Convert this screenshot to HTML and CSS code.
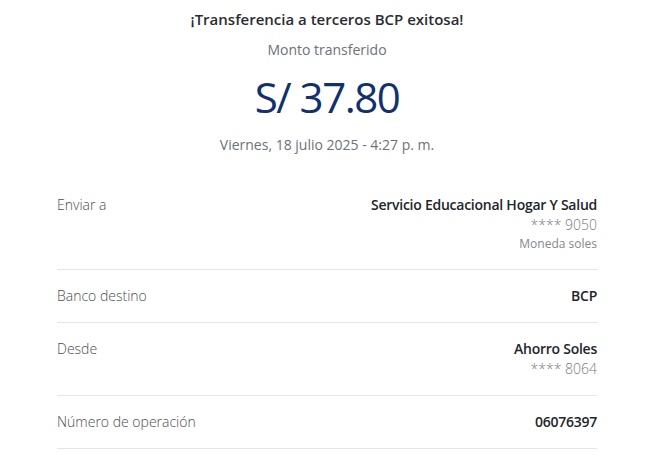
FILE: index.html
```html
<!DOCTYPE html>
<html lang="es">
<head>
    <meta charset="UTF-8">
    <meta name="viewport" content="width=device-width, initial-scale=1.0">
    <title>Constancia de transferencia</title>
    <link rel="stylesheet" href="styles.css">
</head>
<body>

    <div class="receipt">
        <div class="summary">
            <h2 class="title">¡Transferencia a terceros BCP exitosa!</h2>
            <p class="caption">Monto transferido</p>
            <p class="amount">S/ 37.80</p>
            <p class="date">Viernes, 18 julio 2025 - 4:27 p. m.</p>
        </div>

        <div class="details">
            <div class="row">
                <span class="label">Enviar a</span>
                <div class="value">
                    <strong>Servicio Educacional Hogar Y Salud</strong>
                    <span class="sub">**** 9050</span>
                    <span class="note">Moneda soles</span>
                </div>
            </div>
            <div class="row">
                <span class="label">Banco destino</span>
                <div class="value">
                    <strong>BCP</strong>
                </div>
            </div>
            <div class="row">
                <span class="label">Desde</span>
                <div class="value">
                    <strong>Ahorro Soles</strong>
                    <span class="sub">**** 8064</span>
                </div>
            </div>
            <div class="row">
                <span class="label">Número de operación</span>
                <div class="value">
                    <strong>06076397</strong>
                </div>
            </div>
        </div>
    </div>

</body>
</html>
```

FILE: styles.css
```css
body {
    font-family: "Open Sans", sans-serif;
    margin: 0;
    padding: 0;
    background-color: #fff;
    color: #333;
}

.receipt {
    width: 540px;
    margin: 0 0 0 57px;
}

.summary {
    text-align: center;
    padding-top: 8px;
}

.title {
    margin: 0;
    font-size: 15px;
    font-weight: 600;
    line-height: 22px;
    color: #2a2d34;
}

.caption {
    margin: 10px 0 0;
    font-size: 14px;
    line-height: 20px;
    color: #6d7178;
}

.amount {
    margin: 9px 0 0;
    font-size: 42px;
    line-height: 56px;
    letter-spacing: -1.5px;
    color: #13306c;
}

.date {
    margin: 10px 0 0;
    font-size: 14px;
    line-height: 20px;
    color: #6d7178;
}

.details {
    margin-top: 24px;
}

.row {
    display: flex;
    justify-content: space-between;
    align-items: flex-start;
    padding: 16px 0;
    border-bottom: 1px solid #e6e6e6;
}

.label {
    font-size: 14px;
    line-height: 20px;
    font-weight: 300;
    color: #4a4d52;
}

.value {
    display: flex;
    flex-direction: column;
    align-items: flex-end;
    text-align: right;
}

.value strong {
    font-size: 14px;
    line-height: 20px;
    font-weight: 600;
    letter-spacing: -0.25px;
    color: #22252b;
}

.sub {
    font-size: 14px;
    line-height: 20px;
    font-weight: 300;
    color: #777a80;
}

.note {
    font-size: 12px;
    line-height: 18px;
    color: #85888d;
}
```
